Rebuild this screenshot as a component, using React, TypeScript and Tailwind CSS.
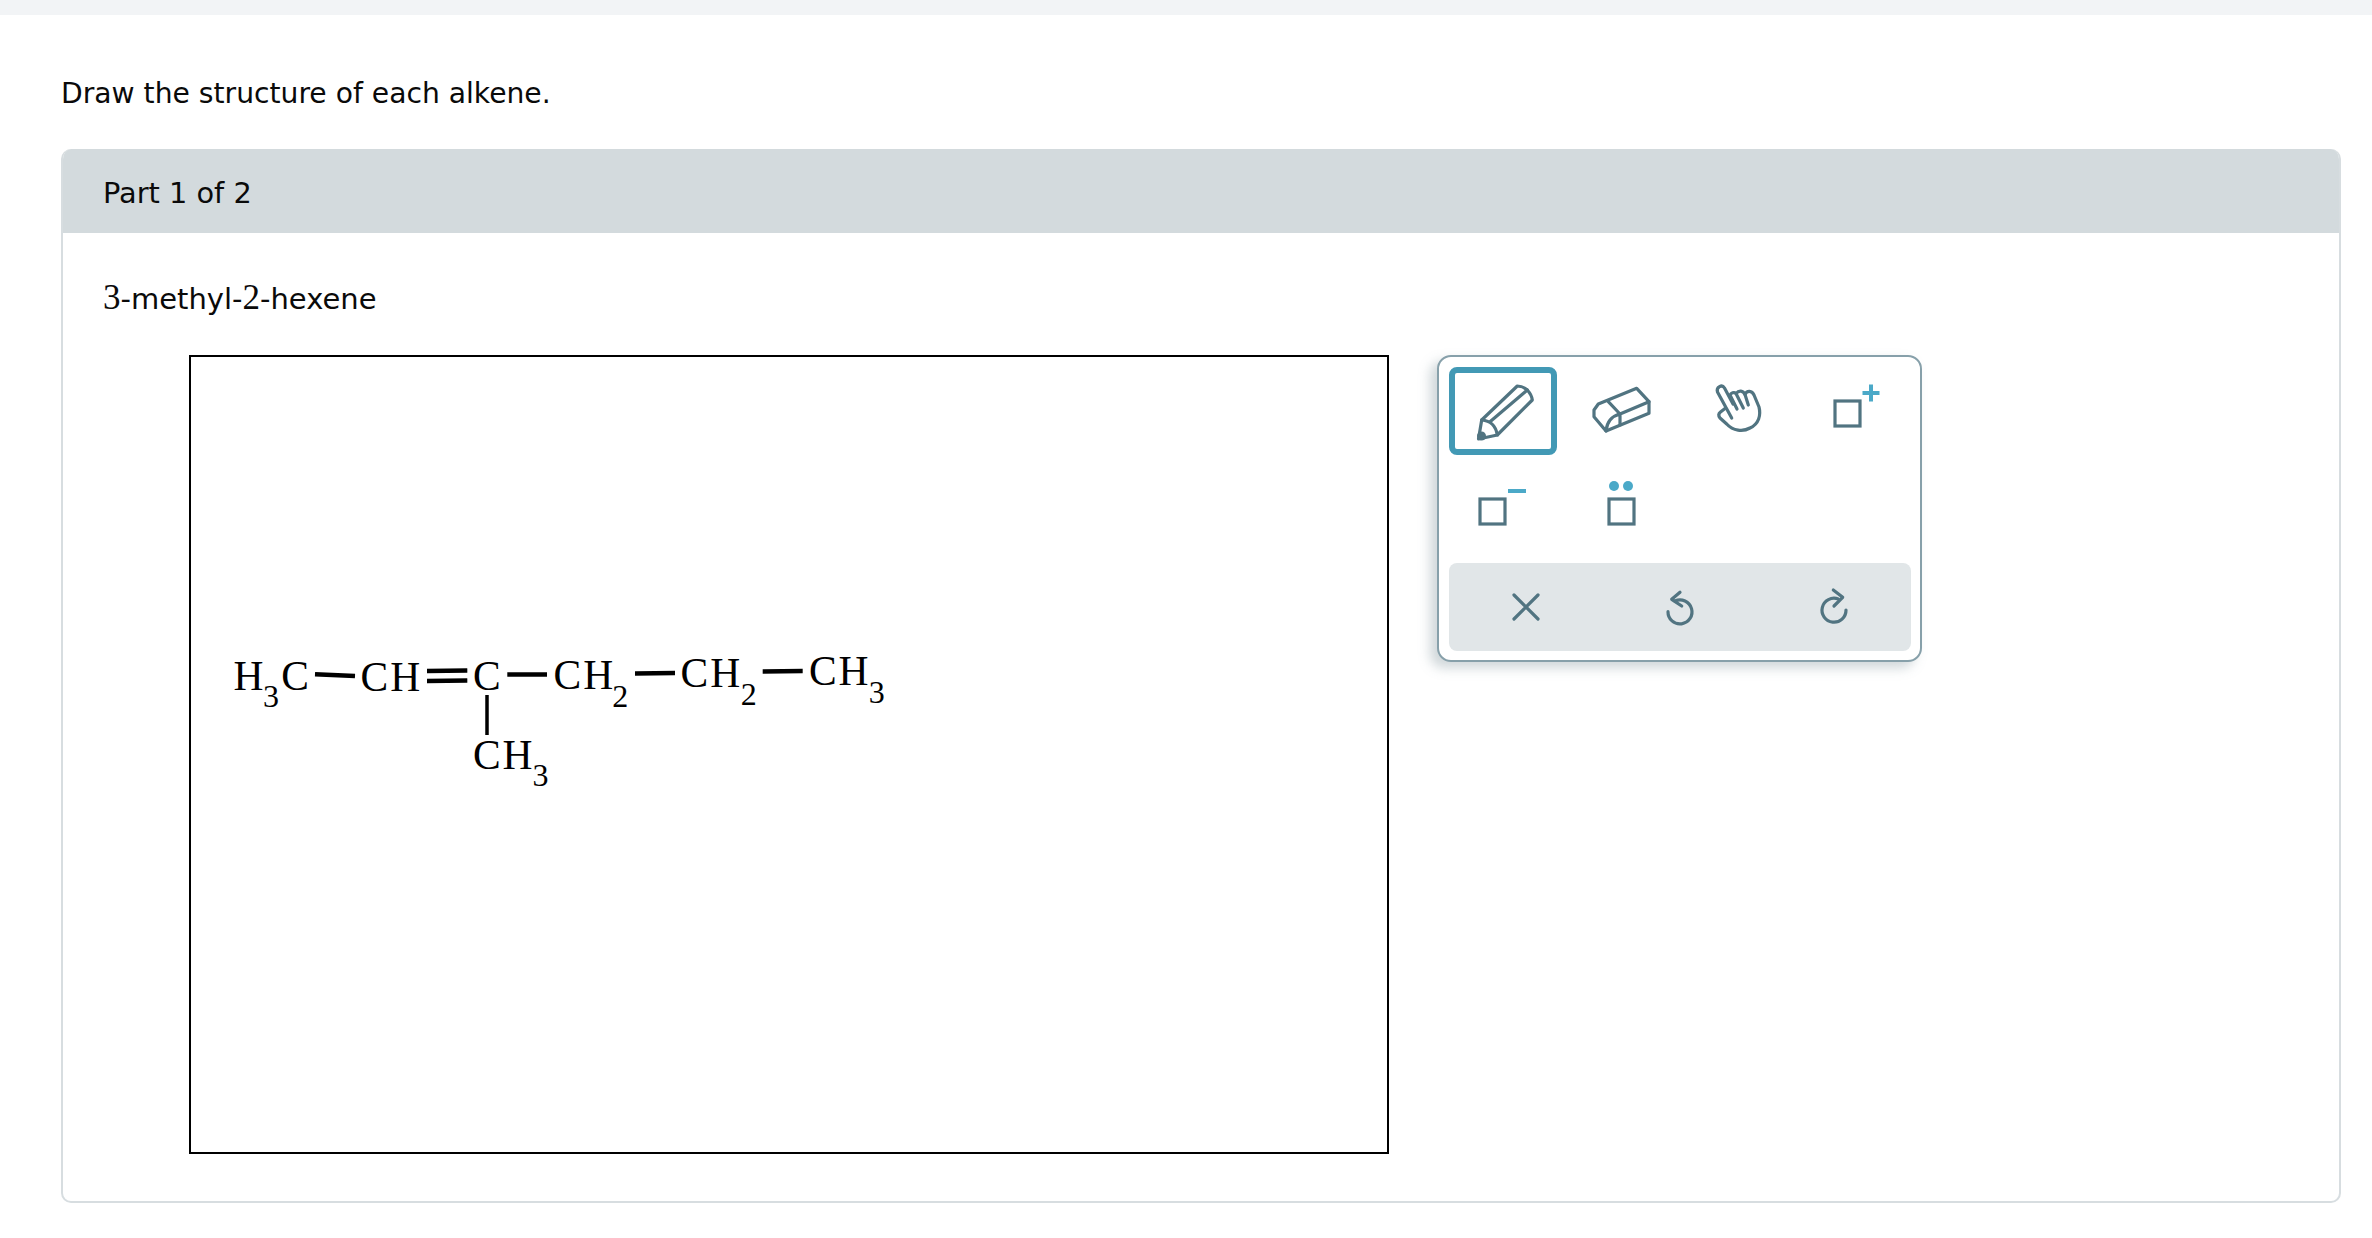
const ink = "#517481"
const accent = "#4ba9c8"

// chain text as it sits in the sketcher
const atoms = [
  { t: "H", x: 44.6, y: 335 },
  { t: "3", x: 74, y: 351.7, sub: true },
  { t: "C", x: 92.2, y: 334.5 },
  { t: "CH", x: 171.6, y: 336.3 },
  { t: "C", x: 283.9, y: 334.5 },
  { t: "CH", x: 364.5, y: 334.3 },
  { t: "2", x: 423.3, y: 351.7, sub: true },
  { t: "CH", x: 491.6, y: 331.7 },
  { t: "2", x: 551.7, y: 350, sub: true },
  { t: "CH", x: 619.9, y: 330 },
  { t: "3", x: 679.7, y: 347.7, sub: true },
  { t: "CH", x: 283.9, y: 414 },
  { t: "3", x: 343.4, y: 431, sub: true },
]

const bonds = [
  [126, 319.3, 166, 321],
  [238, 315.9, 278.3, 315.5],
  [238, 325.9, 278.3, 325.5],
  [318.3, 319.5, 358, 319.5],
  [446, 318.5, 486, 318.1],
  [573.7, 316.5, 613.7, 316.1],
  [298, 340, 298, 380],
]

const Molecule = () => (
  <svg className="absolute inset-0" width="1196" height="795" viewBox="2 2 1196 795">
    {bonds.map((b, i) => (
      <line key={i} x1={b[0]} y1={b[1]} x2={b[2]} y2={b[3]} strokeWidth={i === 6 ? 3.5 : 4.5} stroke="#000" />
    ))}
    {atoms.map((a, i) => (
      <text key={i} x={a.x} y={a.y} fontSize={a.sub ? 32 : 41.5} letterSpacing={a.sub ? 0 : 2} fontFamily="'Liberation Serif', serif" fill="#000">
        {a.t}
      </text>
    ))}
  </svg>
)

const Icon = ({ children }: { children?: React.ReactNode }) => (
  <svg width="108" height="88" viewBox="0 0 108 88" fill="none" stroke={ink} strokeWidth="3.2" strokeLinejoin="round" strokeLinecap="round">
    {children}
  </svg>
)

const Pencil = () => (
  <Icon>
    <path d="M32.7 53 68.3 19C72 19 76 21 78.3 23 81 26 83 30 83.3 33L48.3 68 29.5 72Z" />
    <path d="M32.7 53Q46 54 48.3 68M41 54.7 78.3 23" />
    <circle cx="32.5" cy="69" r="4.5" fill={ink} stroke="none" />
  </Icon>
)

const Eraser = () => (
  <Icon>
    <path d="M70.7 21.3 83 34.7V46.3L40 64 28 49.7V43L32.3 37Z" />
    <path d="M42.3 34.7 54 47 83 34.7M54 47V58M40 64Q41.3 50.3 54 47" />
  </Icon>
)

const Hand = () => (
  <Icon>
    <path d="M48.7 51 34.5 25C33 20 39 17 41.5 21L50 37" />
    <path d="M42 41.5 37.5 45C35 47 35.5 49 37 51L43.7 57C50 64 60 65 67 61 76 57 78 48 76 40L71 28C69 23.5 64 23 62 27.5L65.3 38" />
    <path d="M62 27.5C60 23.5 56 23 53 26.5L60.3 41M53 26.5C51 24.5 48 26 47 28L54 42" />
  </Icon>
)

const Square = ({ x, y }: { x: number, y: number }) => (
  <rect x={x} y={y} width="25" height="25" strokeWidth="3.2" strokeLinejoin="miter" />
)

const tools = [
  <Pencil />,
  <Eraser />,
  <Hand />,
  <Icon>
    <Square x={35} y={34} />
    <path d="M71 17.5V34.5M62.5 26H79.5" stroke={accent} strokeWidth="4" strokeLinecap="butt" />
  </Icon>,
  <Icon>
    <Square x={31} y={38} />
    <path d="M59 30H77" stroke={accent} strokeWidth="4" strokeLinecap="butt" />
  </Icon>,
  <Icon>
    <Square x={43} y={38} />
    <circle cx="48" cy="25" r="5" fill={accent} stroke="none" />
    <circle cx="62" cy="25" r="5" fill={accent} stroke="none" />
  </Icon>,
]

const Action = ({ children }: { children?: React.ReactNode }) => (
  <div className="flex items-center justify-center">
    <svg width="40" height="40" viewBox="0 0 40 40" fill="none" stroke={ink} strokeWidth="3.2" strokeLinecap="round" strokeLinejoin="round">
      {children}
    </svg>
  </div>
)

const Toolbox = () => (
  <div className="ml-12 h-[307px] w-[485px] shrink-0 rounded-[14px] border-2 border-[#87a0aa] bg-white px-[10px] pt-[10px] shadow-[-7px_6px_12px_rgba(120,140,150,0.35)]">
    <div className="grid grid-cols-[repeat(4,108px)] auto-rows-[88px] gap-x-[9px] gap-y-[6px]">
      {tools.map((tool, i) => (
        <div key={i} className={`relative h-[88px] w-[108px] ${i === 0 ? "rounded-lg outline-[6px] -outline-offset-[6px] outline-[#4299b5]" : ""}`}>
          {tool}
        </div>
      ))}
    </div>
    <div className="mt-[14px] grid h-[88px] w-[462px] grid-cols-3 rounded-lg bg-[#e1e6e8]">
      <Action>
        <path d="M8 8 32 32M32 8 8 32" />
      </Action>
      <Action>
        <path d="M15 14A12 12 0 1 1 8 24.7" />
        <path d="M20 5.3 11.7 12.3 21.7 19" />
      </Action>
      <Action>
        <path d="M24.3 12A12 12 0 1 0 32 23" />
        <path d="M19.3 3 28.7 10.3 20 19" />
      </Action>
    </div>
  </div>
)

export default function App() {
  return (
    <div className="h-[1238px] overflow-hidden bg-white font-['DejaVu_Sans',sans-serif] text-[#0a0a0a]">
      <div className="h-[15px] bg-[#f2f4f6]" />
      <div className="pl-[61px] pr-[31px]">
        <p className="mt-[59px] text-[28.2px] leading-[40px]">Draw the structure of each alkene.</p>
        <div className="mt-[35px] overflow-hidden rounded-[10px] border-2 border-t-0 border-[#d7dde0]">
          <div className="-mx-[2px] flex h-[84px] items-center bg-[#d3dadd] pl-[42px] pt-[5px] text-[28.8px]">Part 1 of 2</div>
          <div className="pl-[40px] pb-[47px]">
            <p className="mt-[45px] h-[40px] text-[29px] leading-[40px]">
              <span className="font-['Liberation_Serif',serif] text-[35px]">3</span>-methyl-<span className="font-['Liberation_Serif',serif] text-[35px]">2</span>-hexene
            </p>
            <div className="ml-[86px] mt-[37px] flex items-start">
              <div className="relative h-[799px] w-[1200px] shrink-0 border-2 border-black bg-white">
                <Molecule />
              </div>
              <Toolbox />
            </div>
          </div>
        </div>
      </div>
    </div>
  )
}
